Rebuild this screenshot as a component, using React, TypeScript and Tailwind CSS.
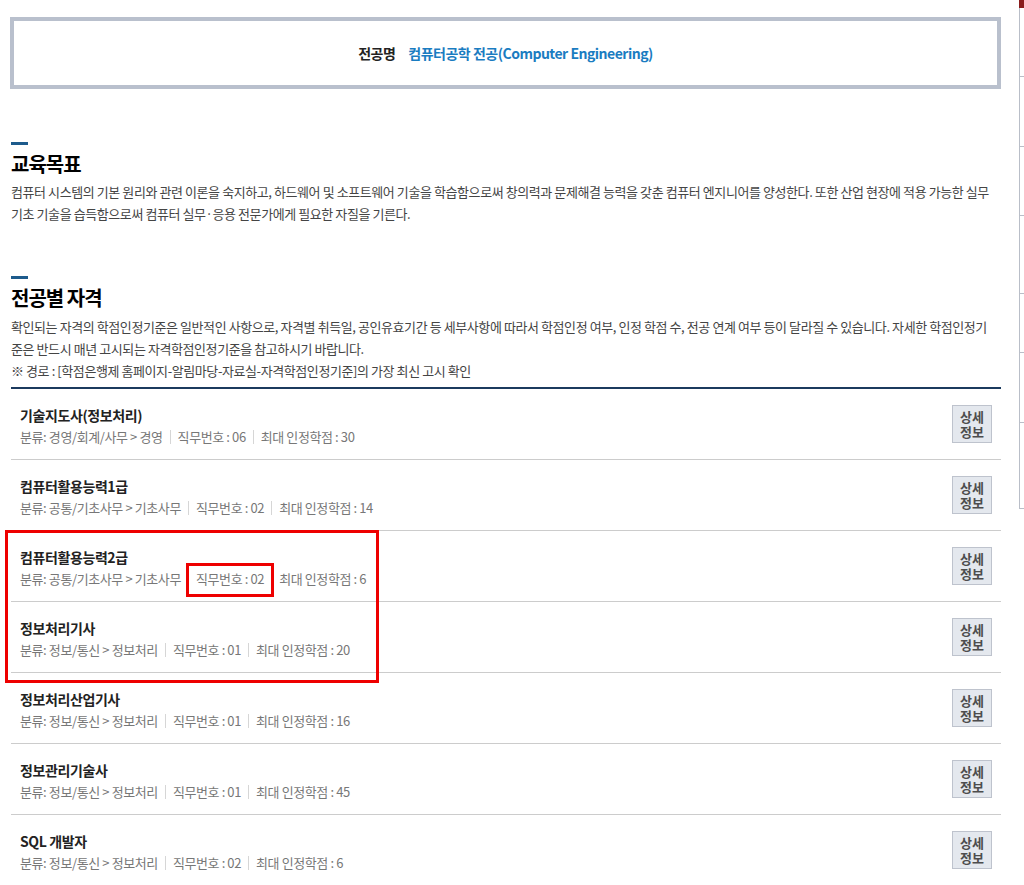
import type { ReactNode } from 'react'

type Cert = {
  name: string
  category: string
  jobNo: string
  maxCredit: string
}

const certs: Cert[] = [
  { name: '기술지도사(정보처리)', category: '경영/회계/사무 > 경영', jobNo: '06', maxCredit: '30' },
  { name: '컴퓨터활용능력1급', category: '공통/기초사무 > 기초사무', jobNo: '02', maxCredit: '14' },
  { name: '컴퓨터활용능력2급', category: '공통/기초사무 > 기초사무', jobNo: '02', maxCredit: '6' },
  { name: '정보처리기사', category: '정보/통신 > 정보처리', jobNo: '01', maxCredit: '20' },
  { name: '정보처리산업기사', category: '정보/통신 > 정보처리', jobNo: '01', maxCredit: '16' },
  { name: '정보관리기술사', category: '정보/통신 > 정보처리', jobNo: '01', maxCredit: '45' },
  { name: 'SQL 개발자', category: '정보/통신 > 정보처리', jobNo: '02', maxCredit: '6' },
]

// 오른쪽 가장자리 눈금 간격
const ticks = [69, 70, 69, 78, 59, 70, 86]

function SectionTitle({ children }: { children: ReactNode }) {
  return (
    <div className="flex flex-col gap-[6px]">
      <div className="h-[3px] w-[17px] bg-[#1d5b8c]" />
      <h2 className="text-[20px] font-bold leading-[26px] tracking-[-1px] text-black">
        {children}
      </h2>
    </div>
  )
}

function Sep() {
  return <span className="mx-[7px] inline-block h-[14px] w-px bg-[#d6d6d6] align-[-2px]" />
}

function CertRow({ cert }: { cert: Cert }) {
  return (
    <li className="flex items-center justify-between border-b border-[#cccccc] pl-[9px] pr-[9px]">
      <div className="flex flex-col gap-[2px] pt-[16px] pb-[12px]">
        <p className="text-[14px] font-bold leading-[20px] tracking-[-0.4px] text-[#222]">
          {cert.name}
        </p>
        <p className="whitespace-nowrap text-[13px] leading-[20px] tracking-[-0.4px] text-[#777]">
          <span>분류: {cert.category}</span>
          <Sep />
          <span>직무번호 : {cert.jobNo}</span>
          <Sep />
          <span>최대 인정학점 : {cert.maxCredit}</span>
        </p>
      </div>
      <button
        type="button"
        className="flex h-[38px] w-[40px] flex-col items-center justify-center gap-[1px] border border-[#bec3cd] bg-[#e4e8ee] text-[13px] font-bold leading-[14px] text-[#4d4d4d]"
      >
        <span>상세</span>
        <span>정보</span>
      </button>
    </li>
  )
}

export default function App() {
  return (
    <div
      className="relative min-h-[885px] bg-white"
      style={{ fontFamily: '"Noto Sans CJK KR", "Noto Sans", sans-serif' }}
    >
      <div className="flex w-[1001px] flex-col pl-[10px] pt-[17px]">
        {/* 전공명 */}
        <div className="flex h-[72px] items-center justify-center gap-[13px] border-4 border-[#b9c0cd] text-[14px] tracking-[-0.5px]">
          <span className="font-bold text-[#222]">전공명</span>
          <span className="font-semibold text-[#1a7cc1]">
            컴퓨터공학 전공(Computer Engineering)
          </span>
        </div>

        <div className="flex flex-col gap-[51px] pl-px pt-[53px]">
          {/* 교육목표 */}
          <section className="flex flex-col gap-[4px]">
            <SectionTitle>교육목표</SectionTitle>
            <p className="whitespace-nowrap text-[13px] leading-[22px] tracking-[-0.42px] text-[#444]">
              컴퓨터 시스템의 기본 원리와 관련 이론을 숙지하고, 하드웨어 및 소프트웨어 기술을 학습함으로써 창의력과 문제해결 능력을 갖춘 컴퓨터 엔지니어를 양성한다. 또한 산업 현장에 적용 가능한 실무
              <br />
              기초 기술을 습득함으로써 컴퓨터 실무·응용 전문가에게 필요한 자질을 기른다.
            </p>
          </section>

          {/* 전공별 자격 */}
          <section className="flex flex-col gap-[5px]">
            <SectionTitle>전공별 자격</SectionTitle>
            <p className="whitespace-nowrap text-[13px] leading-[22px] tracking-[-0.42px] text-[#444]">
              확인되는 자격의 학점인정기준은 일반적인 사항으로, 자격별 취득일, 공인유효기간 등 세부사항에 따라서 학점인정 여부, 인정 학점 수, 전공 연계 여부 등이 달라질 수 있습니다. 자세한 학점인정기
              <br />
              준은 반드시 매년 고시되는 자격학점인정기준을 참고하시기 바랍니다.
              <br />※ 경로 : [학점은행제 홈페이지-알림마당-자료실-자격학점인정기준]의 가장 최신 고시 확인
            </p>

            <ul className="border-t-2 border-[#1b3a5e]">
              {certs.map((c) => (
                <CertRow key={c.name} cert={c} />
              ))}
            </ul>
          </section>
        </div>
      </div>

      {/* 강조 표시 (주석 박스) */}
      <div className="pointer-events-none absolute left-[5px] top-[530px] h-[153px] w-[374px] border-[3px] border-[#ee0000]" />
      <div className="pointer-events-none absolute left-[186px] top-[563px] h-[34px] w-[88px] border-[3px] border-[#ee0000]" />

      {/* 오른쪽 가장자리에 걸친 다른 창 */}
      <div className="absolute right-0 top-0 flex w-[5px] flex-col">
        <div className="h-[8px] bg-[#8a1c1c]" />
        {ticks.map((h, i) => (
          <div
            key={i}
            className="border-b border-l border-[#b9bec8]"
            style={{ height: h }}
          />
        ))}
      </div>
    </div>
  )
}
